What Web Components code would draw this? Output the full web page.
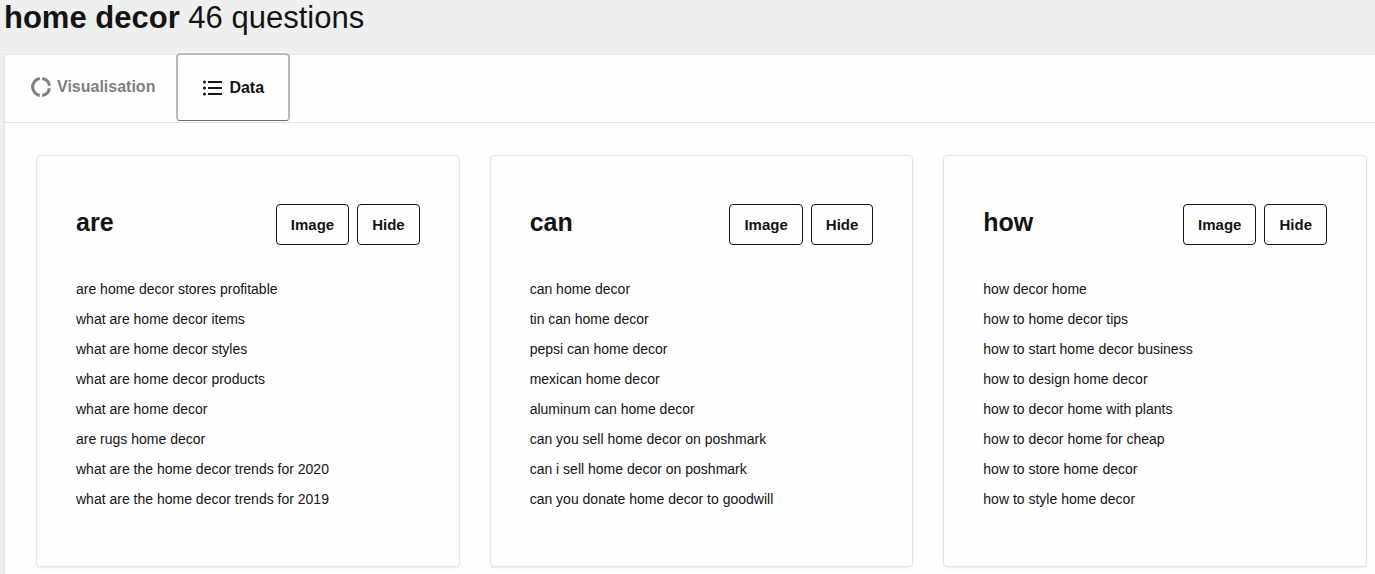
<!DOCTYPE html>
<html lang="en">
<head>
    <meta charset="UTF-8">
    <meta name="viewport" content="width=device-width, initial-scale=1.0">
    <title>home decor - questions</title>

    <style>
        body {
            margin: 0;
            background: #eef0f0;
            color: #141414;
            font-family: "Liberation Sans", Arial, sans-serif;
        }
    </style>
</head>
<body>

    <template id="tmpl-page">
        <style>
            :host {
                display: block;
                padding-left: 4px;
            }
            h1 {
                margin: 0 0 18px;
                font-size: 31px;
                line-height: 36px;
                font-weight: 400;
            }
            .panel {
                background: #fefefe;
                border: 1px solid #e2e4e4;
                border-right: 0;
            }
            .columns {
                display: grid;
                grid-template-columns: repeat(3, 1fr);
                gap: 30px;
                padding: 32px 8px 32px 31px;
            }
        </style>

        <h1><b><slot name="keyword"></slot></b> <slot name="total"></slot></h1>
        <div class="panel">
            <slot name="tabs"></slot>
            <div class="columns"><slot></slot></div>
        </div>
    </template>

    <template id="tmpl-tabs">
        <style>
            :host {
                display: flex;
                height: 67px;
                border-bottom: 1px solid #e2e4e4;
            }
        </style>
        <slot></slot>
    </template>

    <template id="tmpl-tab">
        <style>
            :host {
                display: block;
            }
            button {
                display: flex;
                align-items: center;
                gap: 6px;
                box-sizing: border-box;
                height: 64px;
                padding: 0 19px 0 24px;
                border: 2px solid transparent;
                border-radius: 4px;
                background: none;
                color: #808080;
                font: bold 16px/20px "Liberation Sans", Arial, sans-serif;
            }
            ::slotted(svg) {
                display: block;
            }
            :host([active]) button {
                height: 68px;
                margin-top: -2px;
                padding: 0 24px 0 25px;
                border-color: #b8b8be;
                border-bottom: 1px solid #6c6c78;
                box-shadow: 0 0 0 1px #fefefe;
                background: #fefefe;
                color: #141414;
            }
        </style>
        <button type="button"><slot name="icon"></slot><slot></slot></button>
    </template>

    <template id="tmpl-card">
        <style>
            :host {
                display: block;
                padding: 48px 39px 52px;
                border: 1px solid #e4e4e4;
                border-radius: 4px;
                box-shadow: 0 1px 2px rgba(0, 0, 0, 0.08);
                background: #fefefe;
            }
            header {
                display: flex;
                align-items: center;
                gap: 8px;
                margin-bottom: 29px;
            }
            h2 {
                flex: 1;
                margin: 0 0 6px;
                font-size: 25px;
                line-height: 30px;
            }
            button {
                height: 41px;
                padding: 0 14px;
                border: 1px solid #141414;
                border-radius: 4px;
                background: #fefefe;
                color: #141414;
                font: bold 15px "Liberation Sans", Arial, sans-serif;
            }
            ul {
                margin: 0;
                padding: 0;
                list-style: none;
                font-size: 14px;
                line-height: 30px;
            }
        </style>
        <header>
            <h2></h2>
            <button type="button">Image</button>
            <button type="button" id="hide">Hide</button>
        </header>
        <ul><slot></slot></ul>
    </template>

    <script>
        function attach (host, id) {
            const shadow = host.attachShadow({mode: 'open'})
            shadow.append( document.getElementById(id).content.cloneNode(true) )
            return shadow
        }

        customElements.define('question-page', class extends HTMLElement {
            connectedCallback() {
                attach(this, "tmpl-page")
            }
        })

        customElements.define('view-tabs', class extends HTMLElement {
            connectedCallback() {
                attach(this, "tmpl-tabs")
            }
        })

        customElements.define('view-tab', class extends HTMLElement {
            connectedCallback() {
                attach(this, "tmpl-tab")

                this.addEventListener("click", function () {
                    for (const tab of this.parentElement.children) {
                        tab.toggleAttribute("active", tab === this)
                    }
                })
            }
        })

        customElements.define('question-card', class extends HTMLElement {
            connectedCallback() {
                const shadow = attach(this, "tmpl-card")
                const list = shadow.querySelector("ul")

                shadow.querySelector("h2").textContent = this.getAttribute("word")

                shadow.getElementById("hide").addEventListener("click", function (event) {
                    list.hidden = !list.hidden
                    event.target.textContent = list.hidden ? "Show" : "Hide"
                })
            }
        })
    </script>

    <question-page>
        <span slot="keyword">home decor</span>
        <span slot="total">46 questions</span>

        <view-tabs slot="tabs">
            <view-tab>
                <svg slot="icon" width="20" height="20" viewBox="0 0 20 20" fill="none" stroke="#808080" stroke-width="3">
                    <path d="M11.2 1.6A8.5 8.5 0 0 1 18.4 8.8M18.4 11.2A8.5 8.5 0 0 1 11.2 18.4M8.8 18.4A8.5 8.5 0 0 1 8.8 1.6"/>
                </svg>
                Visualisation
            </view-tab>
            <view-tab active>
                <svg slot="icon" width="20" height="20" viewBox="0 0 20 20" fill="#141414">
                    <circle cx="1.5" cy="4" r="1.5"/>
                    <circle cx="1.5" cy="10" r="1.5"/>
                    <circle cx="1.5" cy="16" r="1.5"/>
                    <path d="M5 3h14v2H5zM5 9h14v2H5zM5 15h14v2H5z"/>
                </svg>
                Data
            </view-tab>
        </view-tabs>

        <question-card word="are">
            <li>are home decor stores profitable</li>
            <li>what are home decor items</li>
            <li>what are home decor styles</li>
            <li>what are home decor products</li>
            <li>what are home decor</li>
            <li>are rugs home decor</li>
            <li>what are the home decor trends for 2020</li>
            <li>what are the home decor trends for 2019</li>
        </question-card>

        <question-card word="can">
            <li>can home decor</li>
            <li>tin can home decor</li>
            <li>pepsi can home decor</li>
            <li>mexican home decor</li>
            <li>aluminum can home decor</li>
            <li>can you sell home decor on poshmark</li>
            <li>can i sell home decor on poshmark</li>
            <li>can you donate home decor to goodwill</li>
        </question-card>

        <question-card word="how">
            <li>how decor home</li>
            <li>how to home decor tips</li>
            <li>how to start home decor business</li>
            <li>how to design home decor</li>
            <li>how to decor home with plants</li>
            <li>how to decor home for cheap</li>
            <li>how to store home decor</li>
            <li>how to style home decor</li>
        </question-card>
    </question-page>

</body>
</html>
